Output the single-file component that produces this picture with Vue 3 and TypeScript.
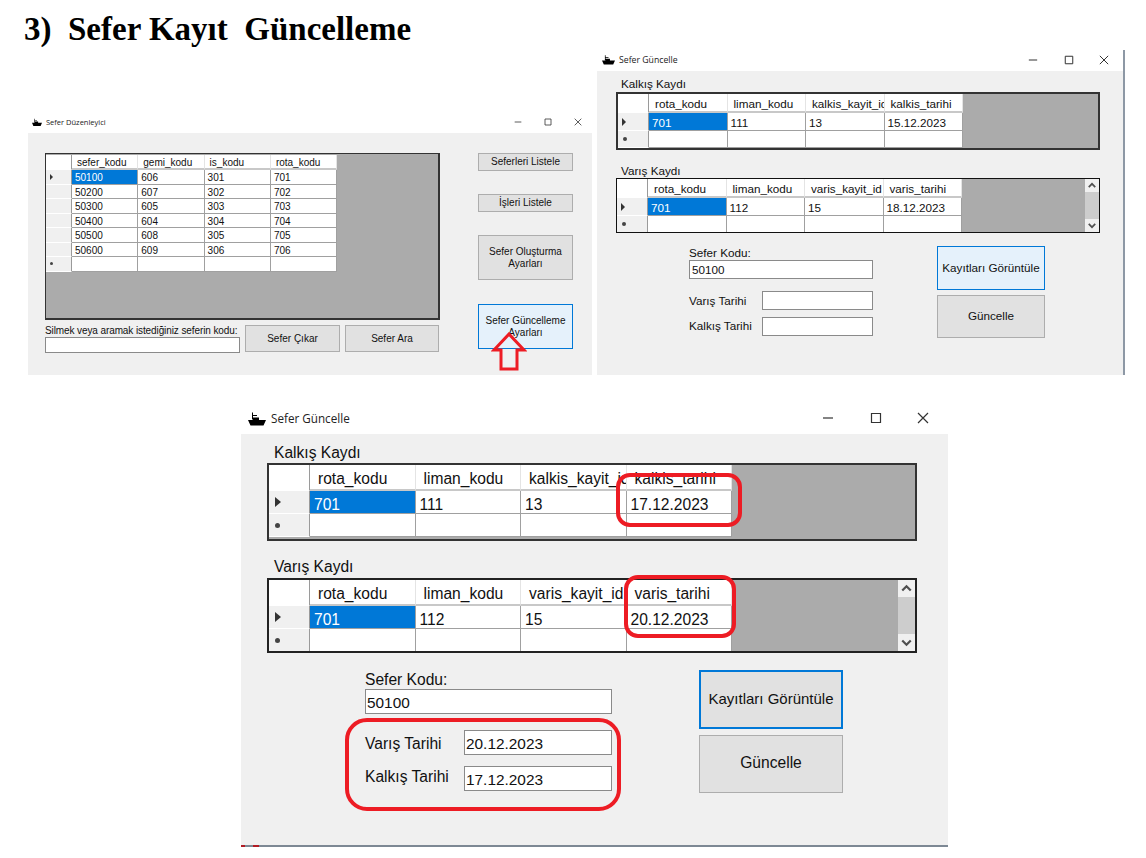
<template>
  <div class="desk">
    <h1 class="doc-title">3)&nbsp; Sefer Kayıt&nbsp; Güncelleme</h1>

    <!-- sefer duzenleyici -->
    <section class="win win-main">
      <header class="titlebar">
        <svg class="ship" viewBox="0 0 18 14"><path d="M0 8.5h18l-2.5 5.5h-13zM4 1h1v7h-1zM5 3.5h4v1h-4zM5 6h6v2.5h-6z" fill="#000" /></svg>
        <span class="title-text">Sefer Düzenleyici</span>
        <div class="controls">
          <span class="ctl"><svg viewBox="0 0 12 12"><path d="M1 6h10" /></svg></span>
          <span class="ctl"><svg viewBox="0 0 12 12"><path d="M1.5 1.5h9v9h-9z" /></svg></span>
          <span class="ctl"><svg viewBox="0 0 12 12"><path d="M1 1l10 10M11 1l-10 10" /></svg></span>
        </div>
      </header>
      <div class="client main-client">
        <div class="main-left">
          <div class="dg main-dg">
            <div class="dg-table">
              <template v-for="(row, r) in mainRows" :key="r">
                <div class="cell rowhead" :class="{ corner: r === 0 }">
                  <i v-if="r === 1" class="marker"></i>
                  <i v-if="r === mainRows.length - 1" class="star"></i>
                </div>
                <div
                  v-for="(val, c) in row"
                  :key="c"
                  class="cell"
                  :class="{ head: r === 0, sel: r === 1 && c === 0 }"
                >{{ val }}</div>
              </template>
            </div>
          </div>
          <div class="main-bottom">
            <div class="search-col">
              <label>Silmek veya aramak istediğiniz seferin kodu:</label>
              <div class="txt"></div>
            </div>
            <button class="btn wide">Sefer Çıkar</button>
            <button class="btn wide">Sefer Ara</button>
          </div>
        </div>
        <div class="main-right">
          <button class="btn small">Seferleri Listele</button>
          <button class="btn small">İşleri Listele</button>
          <button class="btn tall">Sefer Oluşturma<br />Ayarları</button>
          <button class="btn tall hot">Sefer Güncelleme<br />Ayarları</button>
        </div>
      </div>
    </section>

    <!-- sefer guncelle, once kucuk sonra buyuk -->
    <section v-for="f in forms" :key="f.cls" class="win win-form" :class="f.cls">
      <header class="titlebar">
        <svg class="ship" viewBox="0 0 18 14"><path d="M0 8.5h18l-2.5 5.5h-13zM4 1h1v7h-1zM5 3.5h4v1h-4zM5 6h6v2.5h-6z" fill="#000" /></svg>
        <span class="title-text">Sefer Güncelle</span>
        <div class="controls">
          <span class="ctl"><svg viewBox="0 0 12 12"><path d="M1 6h10" /></svg></span>
          <span class="ctl"><svg viewBox="0 0 12 12"><path d="M1.5 1.5h9v9h-9z" /></svg></span>
          <span class="ctl"><svg viewBox="0 0 12 12"><path d="M1 1l10 10M11 1l-10 10" /></svg></span>
        </div>
      </header>
      <div class="client form-client">
        <label class="grid-label first">Kalkış Kaydı</label>
        <div class="dg dg-a">
          <div class="dg-table">
            <div class="cell rowhead corner"></div>
            <div v-for="h in kalkisHead" :key="h" class="cell head">{{ h }}</div>
            <div class="cell rowhead"><i class="marker"></i></div>
            <div class="cell sel">701</div>
            <div class="cell">111</div>
            <div class="cell">13</div>
            <div class="cell">{{ f.kalkis }}</div>
            <div class="cell rowhead"><i class="star"></i></div>
            <div v-for="n in 4" :key="n" class="cell"></div>
          </div>
        </div>
        <label class="grid-label">Varış Kaydı</label>
        <div class="dg dg-b">
          <div class="dg-table">
            <div class="cell rowhead corner"></div>
            <div v-for="h in varisHead" :key="h" class="cell head">{{ h }}</div>
            <div class="cell rowhead"><i class="marker"></i></div>
            <div class="cell sel">701</div>
            <div class="cell">112</div>
            <div class="cell">15</div>
            <div class="cell">{{ f.varis }}</div>
            <div class="cell rowhead"><i class="star"></i></div>
            <div v-for="n in 4" :key="n" class="cell"></div>
          </div>
          <div class="scroll">
            <svg viewBox="0 0 10 10"><path d="M2.5 6.2L5 3.7l2.5 2.5" /></svg>
            <div class="thumb"></div>
            <svg viewBox="0 0 10 10"><path d="M2.5 3.8L5 6.3l2.5-2.5" /></svg>
          </div>
        </div>
        <div class="form-row">
          <div class="fields">
            <label class="kod-label">Sefer Kodu:</label>
            <div class="txt kod">50100</div>
            <div class="field field-varis">
              <label>Varış Tarihi</label>
              <div class="txt date">{{ f.inVaris }}</div>
            </div>
            <div class="field field-kalkis">
              <label>Kalkış Tarihi</label>
              <div class="txt date">{{ f.inKalkis }}</div>
            </div>
          </div>
          <div class="form-btns">
            <button class="btn" :class="f.cls === 'form-sm' ? 'hot' : 'focus'">Kayıtları Görüntüle</button>
            <button class="btn">Güncelle</button>
          </div>
        </div>
      </div>
    </section>

    <!-- kirmizi isaretler -->
    <svg class="arrow" viewBox="0 0 36 40">
      <path d="M18 2L3 18h7v19h16V18h7z" />
    </svg>
    <div class="ring ring-kalkis"></div>
    <div class="ring ring-varis"></div>
    <div class="ring ring-fields"></div>

    <div class="taskbar"><i class="red-a"></i><i class="red-b"></i></div>
  </div>
</template>

<script setup lang="ts">
interface UpdateForm {
  cls: string
  kalkis: string
  varis: string
  inVaris: string
  inKalkis: string
}

const mainRows: string[][] = [
  ['sefer_kodu', 'gemi_kodu', 'is_kodu', 'rota_kodu'],
  ['50100', '606', '301', '701'],
  ['50200', '607', '302', '702'],
  ['50300', '605', '303', '703'],
  ['50400', '604', '304', '704'],
  ['50500', '608', '305', '705'],
  ['50600', '609', '306', '706'],
  ['', '', '', ''],
]

const kalkisHead = ['rota_kodu', 'liman_kodu', 'kalkis_kayit_id', 'kalkis_tarihi']
const varisHead = ['rota_kodu', 'liman_kodu', 'varis_kayit_id', 'varis_tarihi']

const forms: UpdateForm[] = [
  { cls: 'form-sm', kalkis: '15.12.2023', varis: '18.12.2023', inVaris: '', inKalkis: '' },
  { cls: 'form-lg', kalkis: '17.12.2023', varis: '20.12.2023', inVaris: '20.12.2023', inKalkis: '17.12.2023' },
]
</script>

<style>
html, body {
  margin: 0;
  background: #fff;
}
</style>

<style scoped>
.desk {
  position: relative;
  width: 1146px;
  height: 858px;
  overflow: hidden;
  background: #fff;
  font-family: "Liberation Sans", Arial, sans-serif;
  color: #111;
}

.doc-title {
  margin: 0;
  padding: 11px 0 0 24px;
  font-family: "Liberation Serif", "Times New Roman", serif;
  font-size: 33px;
  line-height: 36px;
  font-weight: 700;
  color: #000;
}

.win {
  position: absolute;
  display: flex;
  flex-direction: column;
  background: #fff;
}

.titlebar {
  display: flex;
  align-items: center;
  flex: none;
}

.title-text {
  font-family: "Open Sans", sans-serif;
  color: #222;
}

.controls {
  margin-left: auto;
  display: flex;
}

.ctl {
  display: flex;
  align-items: center;
  justify-content: center;
}

.ctl svg {
  fill: none;
  stroke: #333;
  stroke-width: 1.2;
}

.client {
  flex: 1;
  background: #f0f0f0;
}

/* datagrid */
.dg {
  display: flex;
  flex: none;
  box-sizing: border-box;
  background: #ababab;
  overflow: hidden;
  border: 2px solid #333;
}

.dg-table {
  display: grid;
  align-self: flex-start;
  flex: none;
  grid-template-columns: var(--rh) repeat(4, var(--col));
  grid-template-rows: var(--h0) var(--h1) var(--h2);
}

.cell {
  box-sizing: border-box;
  background: #fff;
  border-right: 1px solid #a0a0a0;
  border-bottom: 1px solid #a0a0a0;
  white-space: nowrap;
  overflow: hidden;
  display: flex;
  align-items: center;
  padding-left: 3px;
  padding-top: 2px;
}

.cell.head {
  padding-left: 6px;
  border-right-color: #e4e4e4;
  border-bottom: 2px solid #c8c8c8;
}

.cell.sel {
  background: #0078d7;
  color: #fff;
}

.rowhead {
  background: #f0f0f0;
  border-right-color: #9a9a9a;
  border-bottom-color: #fff;
  padding-left: 4px;
  padding-top: 0;
}

.rowhead.corner {
  background: #fff;
}

.marker {
  display: block;
  width: 0;
  height: 0;
  border-style: solid;
  border-color: transparent transparent transparent #333;
}

.star {
  display: block;
  border-radius: 50%;
  background: #444;
}

/* buttons and inputs */
.btn {
  box-sizing: border-box;
  display: block;
  padding: 0;
  background: #e1e1e1;
  border: 1px solid #adadad;
  color: #111;
  font: inherit;
  line-height: 1.2;
}

.btn.hot {
  background: #e5f1fb;
  border-color: #0078d7;
}

.btn.focus {
  border: 2px solid #0078d7;
}

.txt {
  box-sizing: border-box;
  background: #fff;
  border: 1px solid #8a8a8a;
  display: flex;
  align-items: center;
  padding-left: 2px;
}

/* ana pencere */
.win-main {
  left: 28px;
  top: 110px;
  width: 564px;
  height: 265px;
  font-size: 10px;
}

.win-main .titlebar {
  height: 23px;
  padding-left: 4px;
}

.win-main .ship {
  width: 10px;
  height: 8px;
  margin-right: 4px;
}

.win-main .title-text {
  font-size: 7.5px;
}

.win-main .controls {
  margin-right: -1px;
}

.win-main .ctl {
  width: 30px;
}

.win-main .ctl svg {
  width: 8px;
  height: 8px;
}

.main-client {
  display: flex;
  padding: 20px 0 0 17px;
}

.main-left {
  width: 395px;
}

.main-dg {
  height: 167px;
  border-width: 1px 2px 2px 1px;
}

.main-dg .dg-table {
  margin-top: 1px;
  grid-template-columns: 26px repeat(4, 66.3px);
  grid-template-rows: 15px repeat(7, 14.5px);
}

.main-dg .cell.head {
  padding-left: 5px;
}

.main-dg .marker {
  border-width: 3px 0 3px 3.5px;
}

.main-dg .star {
  width: 3px;
  height: 3px;
}

.main-bottom {
  display: flex;
  margin-top: 5px;
}

.search-col {
  width: 195px;
  margin-right: 5px;
}

.search-col label {
  display: block;
  height: 12px;
  line-height: 12px;
  white-space: nowrap;
  letter-spacing: -0.1px;
}

.search-col .txt {
  height: 16px;
}

.btn.wide {
  width: 95px;
  height: 27px;
  margin-right: 5px;
}

.btn.wide:last-child {
  width: 94px;
  margin-right: 0;
}

.main-right {
  margin-left: 38px;
  width: 95px;
}

.btn.small {
  width: 95px;
  height: 18px;
  margin-bottom: 23px;
}

.btn.tall {
  width: 95px;
  height: 45px;
  margin-bottom: 24px;
}

/* guncelleme formu, kucuk ve buyuk ayni yapi */
.form-client {
  display: flex;
  flex-direction: column;
}

.grid-label {
  display: block;
  flex: none;
}

.scroll {
  margin-left: auto;
  display: flex;
  flex-direction: column;
  justify-content: space-between;
  background: #f0f0f0;
  flex: none;
}

.scroll svg {
  display: block;
  fill: none;
  stroke: #505050;
  stroke-width: 1.3;
}

.thumb {
  flex: 1;
  background: #cdcdcd;
}

.form-row {
  display: flex;
}

.kod-label {
  display: block;
}

.field {
  display: flex;
  align-items: center;
}

.form-btns {
  display: flex;
  flex-direction: column;
}

.form-sm {
  left: 597px;
  top: 50px;
  width: 528px;
  height: 325px;
  font-size: 11.7px;
  border-right: 2px solid #8d98a5;
  box-sizing: border-box;
  --rh: 31px;
  --col: 78.5px;
  --h0: 19px;
  --h1: 18px;
  --h2: 17px;
}

.form-sm .titlebar {
  height: 19px;
  padding: 0 0 2px 5px;
  box-sizing: content-box;
}

.form-sm .ship {
  width: 13px;
  height: 11px;
  margin-right: 4px;
}

.form-sm .title-text {
  font-size: 8.7px;
}

.form-sm .controls {
  margin-right: 1px;
}

.form-sm .ctl {
  width: 35.5px;
}

.form-sm .ctl svg {
  width: 10px;
  height: 10px;
}

.form-sm .form-client {
  padding-left: 19px;
}

.form-sm .grid-label {
  height: 15px;
  line-height: 15px;
  margin-top: 13px;
  padding-left: 5px;
}

.form-sm .grid-label.first {
  margin-top: 5px;
  margin-bottom: 1px;
}

.form-sm .dg {
  width: 484px;
}

.form-sm .dg-a {
  height: 58px;
}

.form-sm .dg-b {
  height: 55px;
  border-width: 1px;
  border-color: #111;
}

.form-sm .marker {
  border-width: 4px 0 4px 4.5px;
}

.form-sm .star {
  width: 4px;
  height: 4px;
  margin-left: 1px;
}

.form-sm .scroll {
  width: 14px;
}

.form-sm .scroll svg {
  width: 14px;
  height: 13px;
}

.form-sm .form-row {
  margin-top: 13px;
  padding-left: 73px;
}

.form-sm .fields {
  width: 184px;
}

.form-sm .kod-label {
  height: 14px;
  line-height: 14px;
}

.form-sm .txt {
  height: 19px;
}

.form-sm .field-varis {
  margin-top: 12px;
}

.form-sm .field-kalkis {
  margin-top: 7px;
}

.form-sm .field label {
  width: 73px;
}

.form-sm .field-kalkis label {
  margin-bottom: 3px;
}

.form-sm .date {
  width: 111px;
}

.form-sm .form-btns {
  margin-left: 64px;
  width: 108px;
  gap: 5px;
}

.form-sm .btn {
  height: 43.5px;
}

.form-lg {
  left: 241px;
  top: 404px;
  width: 707px;
  height: 442px;
  font-size: 15.6px;
  --rh: 41px;
  --col: 105.5px;
  --h0: 26px;
  --h1: 23px;
  --h2: 23px;
}

.form-lg .titlebar {
  height: 28px;
  padding: 0 0 2px 7px;
}

.form-lg .ship {
  width: 18px;
  height: 15px;
  margin-right: 5px;
}

.form-lg .title-text {
  font-size: 11.7px;
}

.form-lg .controls {
  margin-right: 1px;
}

.form-lg .ctl {
  width: 47.5px;
}

.form-lg .ctl svg {
  width: 12px;
  height: 12px;
}

.form-lg .form-client {
  padding-left: 26px;
}

.form-lg .grid-label {
  height: 20px;
  line-height: 20px;
  margin-top: 16px;
  margin-bottom: 1px;
  padding-left: 7px;
}

.form-lg .grid-label.first {
  margin-top: 9px;
  margin-bottom: 0;
}

.form-lg .dg {
  width: 650px;
}

.form-lg .dg-a {
  height: 78px;
}

.form-lg .dg-b {
  height: 75px;
  border-color: #222;
}

.form-lg .cell {
  padding-left: 4px;
  padding-top: 5px;
}

.form-lg .cell.head {
  padding-left: 8px;
  padding-top: 3px;
}

.form-lg .rowhead {
  padding-left: 6px;
  padding-top: 0;
}

.form-lg .marker {
  border-width: 5px 0 5px 6px;
}

.form-lg .star {
  width: 5px;
  height: 5px;
}

.form-lg .scroll {
  width: 17px;
}

.form-lg .scroll svg {
  width: 17px;
  height: 17px;
}

.form-lg .form-row {
  margin-top: 17px;
  padding-left: 98px;
}

.form-lg .fields {
  width: 247px;
}

.form-lg .kod-label {
  height: 19px;
  line-height: 19px;
}

.form-lg .txt {
  height: 25px;
  padding-top: 2px;
  padding-left: 1px;
  font-size: 15.4px;
}

.form-lg .field-varis {
  margin-top: 16px;
}

.form-lg .field-varis label {
  margin-top: 3px;
}

.form-lg .field-kalkis {
  margin-top: 11px;
}

.form-lg .field-kalkis label {
  margin-bottom: 4px;
}

.form-lg .field label {
  width: 99px;
}

.form-lg .date {
  width: 148px;
}

.form-lg .form-btns {
  margin-left: 87px;
  width: 144px;
  gap: 6px;
}

.form-lg .btn {
  height: 58.5px;
}

.form-lg .btn.focus {
  font-size: 15px;
}

/* annotations */
.arrow {
  position: absolute;
  left: 491px;
  top: 332px;
  width: 36px;
  height: 40px;
  fill: none;
  stroke: #ed1c24;
  stroke-width: 3;
}

.ring {
  position: absolute;
  box-sizing: border-box;
  border: 4px solid #ed1c24;
}

.ring-kalkis {
  left: 616px;
  top: 473px;
  width: 126px;
  height: 54px;
  border-radius: 14px;
}

.ring-varis {
  left: 624px;
  top: 575px;
  width: 112px;
  height: 63px;
  border-radius: 14px;
}

.ring-fields {
  left: 345px;
  top: 718px;
  width: 276px;
  height: 93px;
  border-radius: 22px;
}

.taskbar {
  position: absolute;
  left: 241px;
  top: 845px;
  width: 707px;
  height: 2px;
  background: #7d8894;
}

.red-a,
.red-b {
  position: absolute;
  top: 0;
  height: 2px;
  background: #b01c24;
}

.red-a {
  left: 0;
  width: 4px;
}

.red-b {
  left: 12px;
  width: 6px;
}
</style>
